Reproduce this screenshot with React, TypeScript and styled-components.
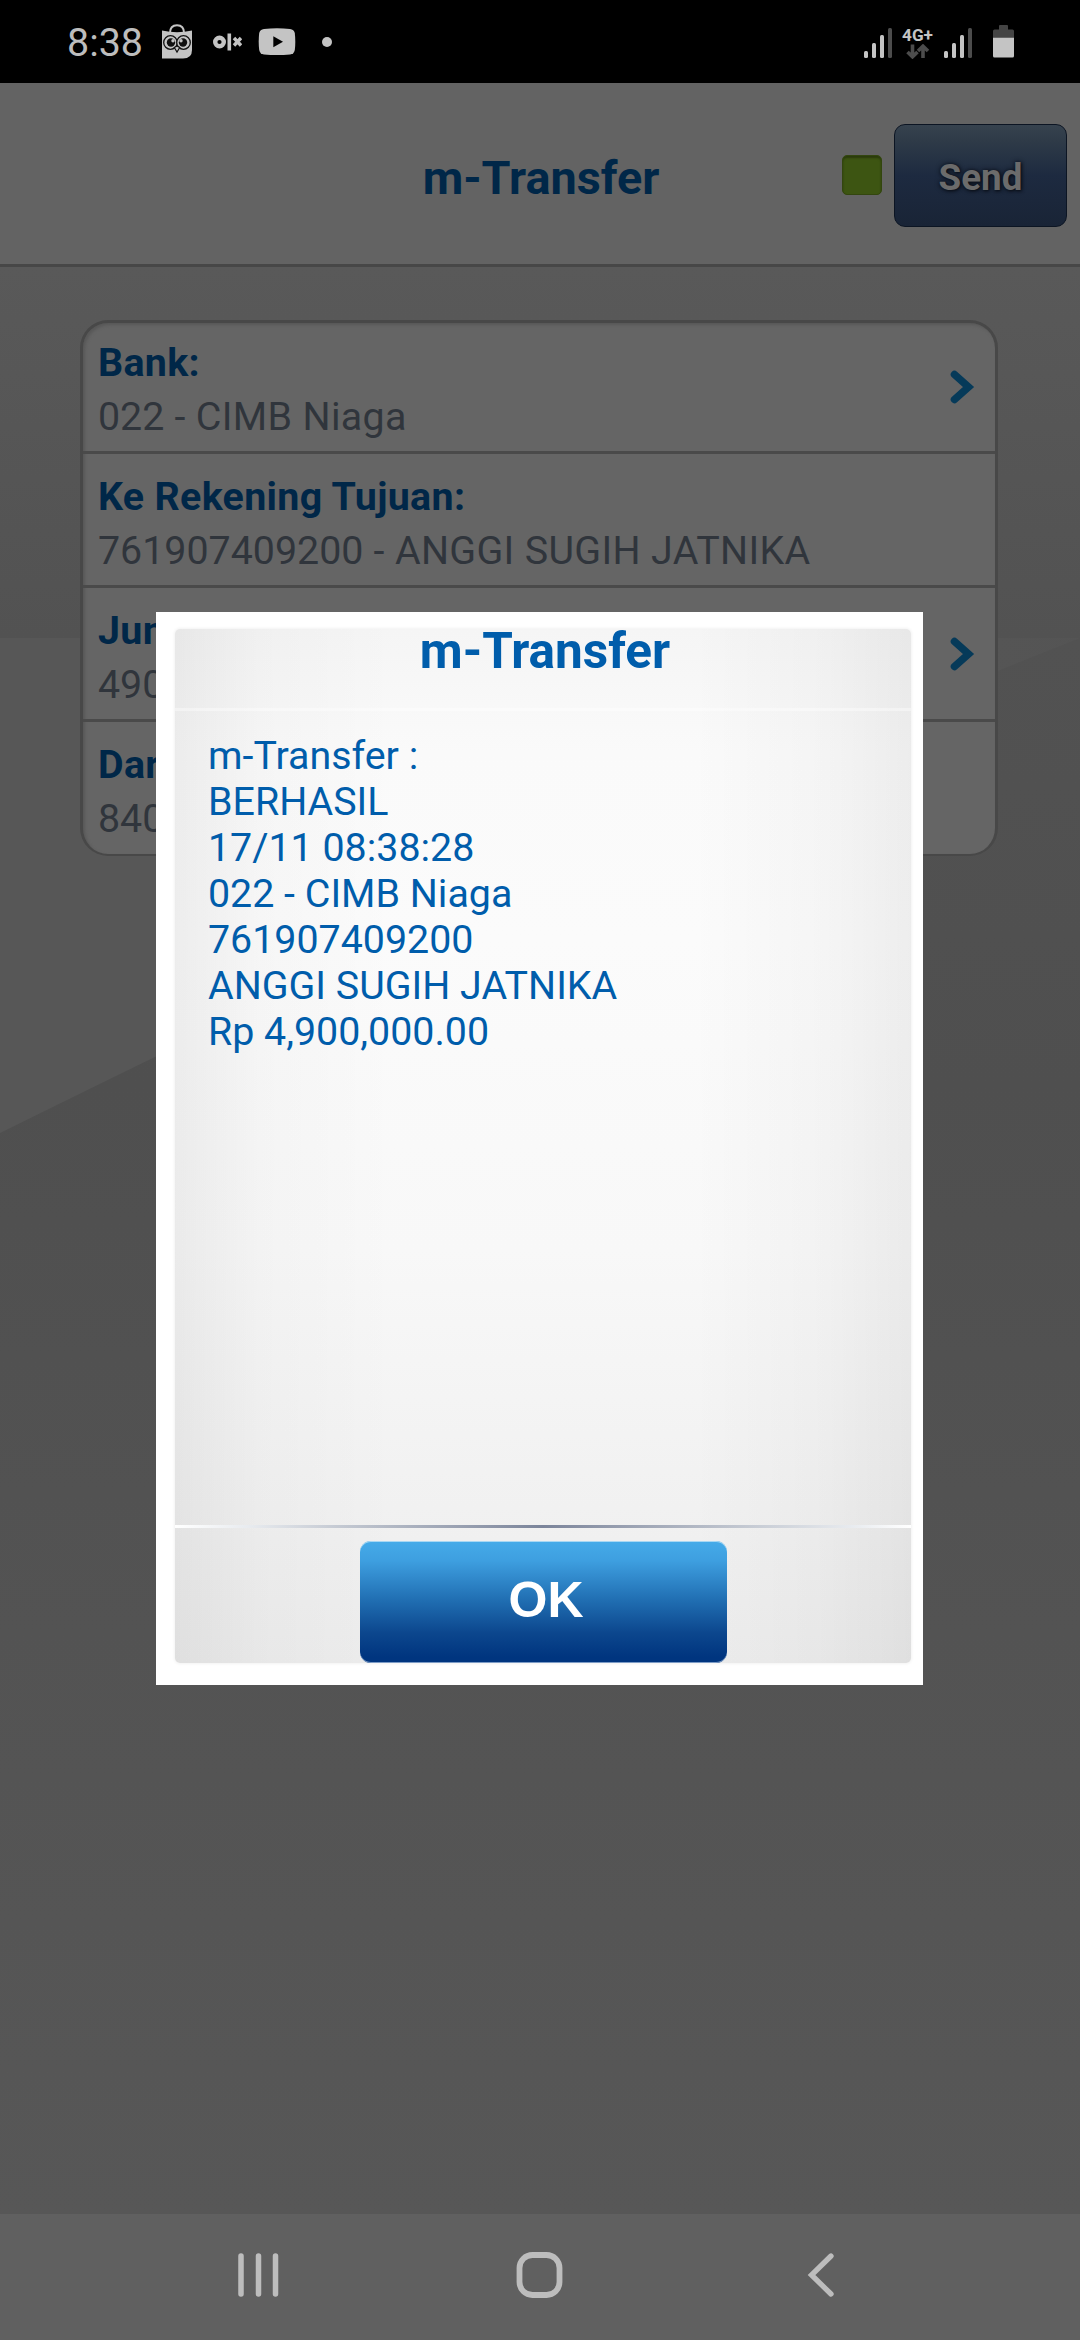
import React from "react";
import styled, { createGlobalStyle } from "styled-components";

const GlobalStyle = createGlobalStyle`
  * { box-sizing: border-box; }
  body { margin: 0; background: #000; font-family: Roboto, "Liberation Sans", sans-serif; }
`;

const Screen = styled.div`
  position: relative;
  width: 1080px;
  height: 2340px;
  display: flex;
  flex-direction: column;
  overflow: hidden;
`;

const StatusBar = styled.div`
  height: 83px;
  flex: none;
  background: #000;
  display: flex;
  justify-content: space-between;
  align-items: center;
  padding: 0 66px 0 67px;
`;

const StatusGroup = styled.div`
  display: flex;
  align-items: center;
`;

const Clock = styled.span`
  color: #bdbdbd;
  font-size: 39.4px;
  line-height: 46px;
  width: 94px;
  padding-top: 3px;
`;

const StatusIcon = styled.svg<{ $left?: number; $top?: number }>`
  display: block;
  flex: none;
  margin-left: ${(p) => p.$left ?? 0}px;
  margin-top: ${(p) => p.$top ?? 0}px;
`;

const NetworkType = styled.div`
  width: 31px;
  margin-left: 10px;
  display: flex;
  flex-direction: column;
  align-items: center;
  color: #c4c4c4;
  font-size: 17.2px;
  font-weight: 700;
  line-height: 18px;
  white-space: nowrap;
  padding-top: 1px;
`;

const Header = styled.header`
  height: 184px;
  flex: none;
  background: #636363;
  border-bottom: 3px solid #474747;
  display: grid;
  grid-template-columns: 1fr auto 1fr;
  align-items: center;
  padding: 0 13px 0 15px;
`;

const Title = styled.h1`
  grid-column: 2;
  margin: 8px 0 0;
  color: #002748;
  font-size: 46.8px;
  line-height: 56px;
  font-weight: 700;
`;

const Actions = styled.div`
  display: flex;
  justify-content: flex-end;
  align-items: center;
  gap: 12px;
  margin-top: 4px;
`;

const Indicator = styled.div`
  width: 40px;
  height: 40px;
  border-radius: 5px;
  border: 1px solid #33460f;
  background: #3d5512;
  box-shadow: inset 0 2px 2px #2a3a0c;
  margin-bottom: 2px;
`;

const SendButton = styled.button`
  width: 173px;
  height: 103px;
  border: 1px solid #0c1523;
  border-radius: 11px;
  background: linear-gradient(#36424e 0%, #2f3b48 15%, #1d2a40 50%, #192436 100%);
  color: #6b6b6b;
  font: 700 36.75px Roboto, sans-serif;
  text-shadow: 0 0 5px #0a0f18, 1px 1px 3px #0a0f18;
  padding: 4px 0 0;
`;

const Page = styled.main`
  position: relative;
  flex: 1;
  padding: 53px 82px 0 80px;
  background: #535353;
`;

const Backdrop = styled.svg`
  position: absolute;
  inset: 0;
  width: 1080px;
  height: 100%;
`;

const Form = styled.div`
  position: relative;
  height: 536px;
  border: 3px solid #484848;
  border-bottom-width: 2px;
  border-radius: 28px;
  background: #656565;
  box-shadow: inset 2px 2px 3px #585858;
`;

const FieldText = styled.div`
  align-self: flex-start;
  display: flex;
  flex-direction: column;
  font-size: 39.375px;
  line-height: 54px;
  white-space: nowrap;
  color: #30353c;
  padding-top: 15.5px;
`;

const Field = styled.div`
  height: 134px;
  border-bottom: 3px solid #4a4a4a;
  display: flex;
  align-items: center;
  justify-content: space-between;
  padding: 0 19px 0 15px;
  &:first-child { height: 131px; }
  &:first-child ${FieldText} { padding-top: 12.5px; }
  &:last-child { border-bottom: 0; }
`;

const Label = styled.span`
  font-weight: 700;
  letter-spacing: 0.32px;
  color: #002748;
`;

const Value = styled.span`
  white-space: pre;
`;

const Name = styled.span`
  letter-spacing: 0.34px;
`;

const NavBar = styled.nav`
  height: 126px;
  flex: none;
  background: #606060;
  display: grid;
  grid-template-columns: 279px 291px auto;
  align-items: center;
  justify-content: start;
  padding: 0 0 5px 237px;
`;

const Dialog = styled.section`
  position: absolute;
  left: 156px;
  top: 612px;
  width: 767px;
  height: 1073px;
  background: #fff;
  padding: 17px 12px 22px 19px;
`;

const Panel = styled.div`
  height: 100%;
  display: flex;
  flex-direction: column;
  border-radius: 5px;
  background:
    linear-gradient(90deg, rgba(0,0,0,.055), rgba(0,0,0,.02) 12%, rgba(0,0,0,0) 30%, rgba(0,0,0,0) 70%, rgba(0,0,0,.022) 88%, rgba(0,0,0,.055)),
    linear-gradient(#f5f5f5, #fafafa 12%, #fbfbfb 30%, #f8f8f8 60%, #f1f1f1 85%, #ececec);
  box-shadow: 0 0 3px 1px #f3f3f3;
`;

const DialogTitle = styled.h2`
  margin: 0;
  height: 82px;
  flex: none;
  border-bottom: 3px solid rgba(255,255,255,.4);
  padding-left: 4px;
  text-align: center;
  color: #005dab;
  font-size: 49.5px;
  font-weight: 700;
  line-height: 44px;
`;

const Message = styled.div`
  flex: 1;
  padding: 22px 0 0 33px;
  color: #005dab;
  font-size: 39.375px;
  line-height: 46px;
`;

const Line = styled.div``;

const Rule = styled.div`
  height: 3px;
  flex: none;
  background: linear-gradient(90deg, #fff, #e8ebef 10%, #c5cad3 22%, #7b849a 50%, #c5cad3 78%, #e8ebef 92%, #fff);
`;

const DialogFooter = styled.div`
  height: 135px;
  flex: none;
  display: flex;
  justify-content: center;
  padding: 13px 0 0 1px;
`;

const OkButton = styled.button`
  width: 367px;
  height: 122px;
  border: 0;
  border-radius: 11px;
  background: linear-gradient(#45abe9 0%, #3e9fe0 16%, #1f6cb0 50%, #0c478e 75%, #00357f 95%);
  box-shadow: inset 0 1px 0 #a9d8f3, inset 0 -1px 0 #7d9cc6;
  color: #fff;
  font: 700 50px "Liberation Sans", Arial, sans-serif;
  padding: 0 0 4px 5px;
`;

const Signal = ({ left = 0 }: { left?: number }) => (
  <StatusIcon $left={left} $top={2} width="28" height="30" viewBox="0 0 28 30">
    <rect x="0" y="23" width="4" height="7" rx="1.5" fill="#c4c4c4" />
    <rect x="8" y="15" width="4" height="15" rx="1.5" fill="#c4c4c4" />
    <rect x="16" y="7" width="4" height="23" rx="1.5" fill="#c4c4c4" />
    <rect x="24" y="0" width="4" height="30" rx="1.5" fill="#4c4c4c" />
  </StatusIcon>
);

const Chevron = () => (
  <svg width="26" height="34" viewBox="0 0 26 34" fill="none" stroke="#063a59" strokeWidth="7.5">
    <path d="M4.500 4.500 L18.500 17 L4.500 29.500" strokeLinejoin="miter" strokeLinecap="round" />
  </svg>
);

const fields = [
  { label: "Bank:", code: "022", name: " - CIMB Niaga", more: true },
  { label: "Ke Rekening Tujuan:", code: "761907409200", name: " - ANGGI SUGIH JATNIKA", more: false },
  { label: "Jum", code: "490", name: "", more: true },
  { label: "Dari", code: "840", name: "", more: false },
];

const message = [
  "m-Transfer :",
  "BERHASIL",
  "17/11 08:38:28",
  "022 - CIMB Niaga",
  "761907409200",
  "ANGGI SUGIH JATNIKA",
  "Rp 4,900,000.00",
];

export default function App() {
  return (
    <>
      <GlobalStyle />
      <Screen>
        <StatusBar>
          <StatusGroup>
            <Clock>8:38</Clock>
            <StatusIcon width="32" height="36" viewBox="0 0 32 36">
              <path d="M9 9 Q9 1.2 16 1.2 Q23 1.2 23 9" fill="none" stroke="#c4c4c4" strokeWidth="2" />
              <path d="M1 6.5 Q16 10 31 6.5 V26 Q31 34.500 22 34.500 H1 Z" fill="#c4c4c4" />
              <g stroke="#111" strokeWidth="1.3">
                <circle cx="9.500" cy="18.500" r="6.800" fill="#c4c4c4" />
                <circle cx="22.500" cy="18.500" r="6.800" fill="#c4c4c4" />
              </g>
              <circle cx="10" cy="18.500" r="4.200" fill="#111" />
              <circle cx="22" cy="18.500" r="4.200" fill="#111" />
              <circle cx="12" cy="16.800" r="1.700" fill="#c4c4c4" />
              <circle cx="20" cy="16.800" r="1.700" fill="#c4c4c4" />
              <path d="M13.300 23.500 L16 22 L18.700 23.500 L16 28 Z" fill="#c4c4c4" stroke="#111" strokeWidth="1.200" />
            </StatusIcon>
            <StatusIcon $left={20} width="29" height="18" viewBox="0 0 29 18">
              <circle cx="6.500" cy="9" r="4.300" fill="none" stroke="#c4c4c4" strokeWidth="4.400" />
              <rect x="14.500" y="0.500" width="3.600" height="17" fill="#c4c4c4" />
              <path d="M21 5 L28 12.500 M28 5 L21 12.500" stroke="#c4c4c4" strokeWidth="3.400" />
            </StatusIcon>
            <StatusIcon $left={16} width="38" height="28" viewBox="0 0 38 28">
              <path d="M6 1 Q19 -0.300 32 1 Q36 1.500 36.800 5 Q37.800 14 36.800 22 Q36 26 32 26.500 Q19 27.700 6 26.500 Q2 26 1.200 22 Q0.200 14 1.200 5 Q2 1.500 6 1 Z" fill="#c4c4c4" />
              <path d="M15.300 8.200 L25 13.700 L15.300 19.200 Z" fill="#000" />
            </StatusIcon>
            <StatusIcon $left={26} width="10" height="10" viewBox="0 0 10 10">
              <circle cx="5" cy="5" r="5" fill="#c4c4c4" />
            </StatusIcon>
          </StatusGroup>
          <StatusGroup>
            <Signal />
            <NetworkType>
              4G+
              <svg width="24" height="15" viewBox="0 0 24 15" fill="none" stroke="#4c4c4c" strokeWidth="3.600">
                <path d="M6.500 0.500 V12 M1.500 8 L6.500 12.800 L11.500 8" />
                <path d="M17 14 V3 M12 7 L17 2.200 L22 7" />
              </svg>
            </NetworkType>
            <Signal left={11} />
            <StatusIcon $left={21} width="21" height="33" viewBox="0 0 21 33">
              <rect x="6" y="0" width="9" height="6" rx="1" fill="#444" />
              <path d="M0 13 V6 Q0 4.500 1.500 4.500 H19.500 Q21 4.500 21 6 V13 Z" fill="#444" />
              <path d="M0 12.700 H21 V31 Q21 32.500 19.500 32.500 H1.500 Q0 32.500 0 31 Z" fill="#c4c4c4" />
            </StatusIcon>
          </StatusGroup>
        </StatusBar>
        <Header>
          <Title>m-Transfer</Title>
          <Actions>
            <Indicator />
            <SendButton>Send</SendButton>
          </Actions>
        </Header>
        <Page>
          <Backdrop viewBox="0 0 1080 1947" preserveAspectRatio="none">
            <defs>
              <linearGradient id="base" x1="0" y1="0" x2="0" y2="1">
                <stop offset="0" stopColor="#595959" />
                <stop offset="0.190" stopColor="#525252" />
                <stop offset="0.420" stopColor="#4f4f4f" />
                <stop offset="0.700" stopColor="#535353" />
                <stop offset="1" stopColor="#575757" />
              </linearGradient>
              <linearGradient id="ray" x1="0" y1="0" x2="1" y2="0">
                <stop offset="0" stopColor="#575757" />
                <stop offset="0.700" stopColor="#575757" />
                <stop offset="1" stopColor="#575757" stopOpacity="0.450" />
              </linearGradient>
            </defs>
            <rect width="1080" height="1947" fill="url(#base)" />
            <path d="M0 371 H1080 Q700 520 0 866 Z" fill="url(#ray)" />
          </Backdrop>
          <Form>
            {fields.map((f) => (
              <Field key={f.label}>
                <FieldText>
                  <Label>{f.label}</Label>
                  <Value>
                    {f.code}
                    {f.name && <Name>{f.name}</Name>}
                  </Value>
                </FieldText>
                {f.more && <Chevron />}
              </Field>
            ))}
          </Form>
        </Page>
        <NavBar>
          <svg width="43" height="44" viewBox="0 0 43 44" stroke="#bdbdbd" strokeWidth="5.500" strokeLinecap="round">
            <path d="M4 3 V41 M21.500 3 V41 M38.500 3 V41" />
          </svg>
          <svg width="47" height="48" viewBox="0 0 47 48" fill="none" stroke="#bdbdbd" strokeWidth="5.800">
            <rect x="3.500" y="4" width="40" height="40" rx="13" />
          </svg>
          <svg width="29" height="44" viewBox="0 0 29 44" fill="none" stroke="#bdbdbd" strokeWidth="5.300" strokeLinecap="round">
            <path d="M24 3 L4.500 22 L24 41" />
          </svg>
        </NavBar>
        <Dialog>
          <Panel>
            <DialogTitle>m-Transfer</DialogTitle>
            <Message>
              {message.map((m) => (
                <Line key={m}>{m}</Line>
              ))}
            </Message>
            <Rule />
            <DialogFooter>
              <OkButton>OK</OkButton>
            </DialogFooter>
          </Panel>
        </Dialog>
      </Screen>
    </>
  );
}
